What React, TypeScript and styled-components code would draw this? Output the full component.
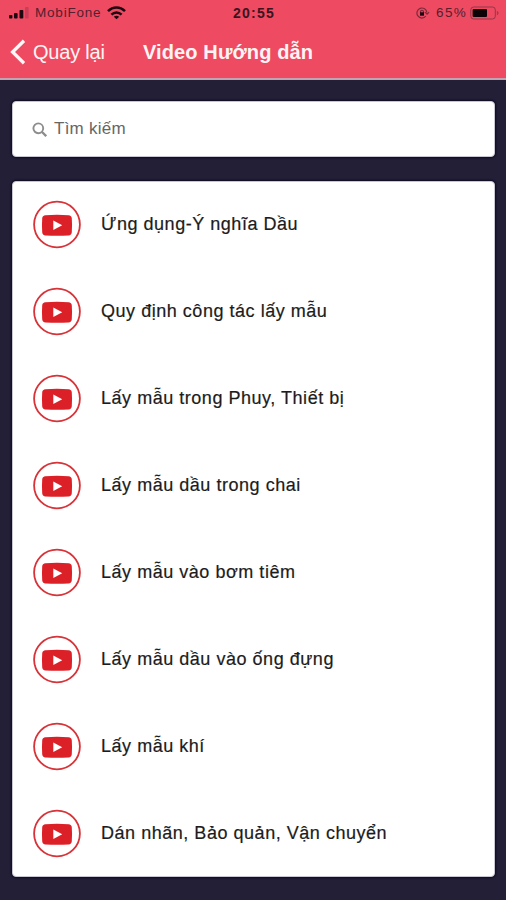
import React from "react";
import styled, { createGlobalStyle } from "styled-components";

const Global = createGlobalStyle`
  * { box-sizing: border-box; }
  body { margin: 0; background: #231f37; font-family: "Liberation Sans", Arial, sans-serif; }
`;

const Screen = styled.div`
  height: 900px;
  overflow: hidden;
  background: #231f37;
`;

const Header = styled.header`
  height: 80px;
  background: #ee4b62;
  border-bottom: 2px solid #c3a3b0;
`;

const StatusBar = styled.div`
  display: grid;
  grid-template-columns: 1fr auto 1fr;
  align-items: center;
  height: 26px;
  padding: 0 7px 0 9px;
  font-size: 13.5px;
  line-height: 26px;
  color: #54202d;
`;

const StatusGroup = styled.div<{ $end?: boolean }>`
  display: flex;
  align-items: center;
  justify-content: ${(p) => (p.$end ? "flex-end" : "flex-start")};
  gap: 6px;
`;

const Carrier = styled.span`
  letter-spacing: 0.8px;
`;

const Clock = styled.span`
  color: #3b1420;
  font-size: 14px;
  font-weight: 700;
  letter-spacing: 1.2px;
`;

const Percent = styled.span`
  letter-spacing: 1.3px;
  margin-right: -3px;
`;

const NavBar = styled.nav`
  display: flex;
  align-items: center;
  height: 52px;
  padding-left: 10px;
  color: #fff4f4;
  font-size: 20px;
`;

const BackButton = styled.button`
  display: flex;
  align-items: center;
  gap: 7px;
  width: 133px;
  padding: 0;
  border: 0;
  background: none;
  color: inherit;
  font: inherit;
  letter-spacing: -0.2px;
  white-space: nowrap;
`;

const Title = styled.h1`
  margin: 0;
  font-size: 20px;
  font-weight: 700;
  letter-spacing: 0.12px;
  white-space: nowrap;
`;

const Content = styled.main`
  display: flex;
  flex-direction: column;
  gap: 24px;
  padding: 21px 11px 0 12px;
`;

const Card = styled.section`
  background: #fff;
  border: 1px solid #c9c7d2;
  border-radius: 4px;
  box-shadow: 0 0 2px 1px #0e0a23;
`;

const SearchCard = styled(Card)`
  display: flex;
  align-items: center;
  gap: 7px;
  height: 56px;
  padding: 0 19px;
`;

const SearchInput = styled.input`
  flex: 1;
  padding: 0;
  border: 0;
  outline: 0;
  background: none;
  color: #666;
  font: 17px "Liberation Sans", Arial, sans-serif;
  letter-spacing: 0.25px;
  &::placeholder { color: #666; opacity: 1; }
`;

const VideoList = styled(Card)`
  height: 696px;
`;

const VideoRow = styled.div`
  display: flex;
  align-items: center;
  gap: 20px;
  height: 86.95px;
  padding-left: 20px;
  font-size: 18px;
  letter-spacing: 0.53px;
  color: #1c1c1c;
  -webkit-text-stroke: 0.2px #1c1c1c;
  white-space: nowrap;
`;

const Label = styled.span`
  margin-top: -2px;
`;

const videos = [
  "Ứng dụng-Ý nghĩa Dầu",
  "Quy định công tác lấy mẫu",
  "Lấy mẫu trong Phuy, Thiết bị",
  "Lấy mẫu dầu trong chai",
  "Lấy mẫu vào bơm tiêm",
  "Lấy mẫu dầu vào ống đựng",
  "Lấy mẫu khí",
  "Dán nhãn, Bảo quản, Vận chuyển",
];

const SignalIcon = () => (
  <svg width="20" height="12" viewBox="0 0 20 12" fill="#1d0710">
    <rect x="0" y="8" width="3.4" height="3.5" rx=".8" />
    <rect x="5" y="6" width="3.6" height="5.5" rx=".8" />
    <rect x="10.5" y="3" width="3.8" height="8.5" rx=".8" />
    <rect x="16" y="0" width="3.6" height="11.5" rx=".8" fill="#c83f57" />
  </svg>
);

const WifiIcon = () => (
  <svg width="19" height="14" viewBox="0 0 19 14" fill="none" stroke="#1d0710" strokeWidth="2.5">
    <path d="M1 5.2C5.9.2 13.1.2 18 5.2" />
    <path d="M4.4 8.7C7.4 5.6 11.6 5.6 14.6 8.7" />
    <path d="M9.5 13.2 6.8 10.7C8.4 9.4 10.6 9.4 12.2 10.7Z" fill="#1d0710" stroke="none" />
  </svg>
);

const RotationLockIcon = () => (
  <svg width="14" height="12" viewBox="0 0 14 12" fill="none" stroke="#7b2b3b" strokeWidth="1.2">
    <path d="M9.8 9.2A5 5 0 1 1 10.9 5.5M8.9 5.1l2.2 2 2-2" />
    <path d="M4.5 6V4.8a1.5 1.5 0 0 1 3 0V6" />
    <rect x="4" y="5.3" width="4" height="3.4" fill="#1d0710" stroke="none" />
  </svg>
);

const BatteryIcon = () => (
  <svg width="29" height="14" viewBox="0 0 29 14">
    <rect x=".8" y="1" width="24.5" height="12" rx="2.8" fill="none" stroke="#923648" />
    <rect x="2.6" y="3" width="14.4" height="8" rx="1" fill="#0d0206" />
    <path d="M26.8 4.7C29.2 5.6 29.2 8.4 26.8 9.3Z" fill="#a33c4f" />
  </svg>
);

const BackIcon = () => (
  <svg width="16" height="26" viewBox="0 0 16 26" fill="none" stroke="#fff7f7" strokeWidth="3.3">
    <path d="M14 1.8 2.6 13 14 24.2" />
  </svg>
);

const SearchIcon = () => (
  <svg width="15" height="15" viewBox="0 0 15 15" fill="none" stroke="#8d8d8d" strokeWidth="1.9">
    <circle cx="6.3" cy="6.3" r="4.9" />
    <path d="m9.8 9.8 4.4 4.4" strokeWidth="2.3" />
  </svg>
);

const VideoIcon = () => (
  <svg width="48" height="50" viewBox="0 0 48 50">
    <circle cx="24" cy="24.5" r="22.9" fill="none" stroke="#d73338" strokeWidth="1.8" />
    <path d="M12.5 15.2Q24 14.4 35.5 15.2Q38.6 15.4 38.8 18.4Q39.3 25.3 38.8 32.2Q38.6 35.1 35.5 35.4Q24 36.2 12.5 35.4Q9.4 35.1 9.2 32.2Q8.7 25.3 9.2 18.4Q9.4 15.4 12.5 15.2Z" fill="#dc2027" />
    <path d="M20.3 20.6 29.2 25.3 20.3 30Z" fill="#fff" />
  </svg>
);

export default function App() {
  return (
    <Screen>
      <Global />
      <Header>
        <StatusBar>
          <StatusGroup><SignalIcon /><Carrier>MobiFone</Carrier><WifiIcon /></StatusGroup>
          <Clock>20:55</Clock>
          <StatusGroup $end><RotationLockIcon /><Percent>65%</Percent><BatteryIcon /></StatusGroup>
        </StatusBar>
        <NavBar>
          <BackButton><BackIcon />Quay lại</BackButton>
          <Title>Video Hướng dẫn</Title>
        </NavBar>
      </Header>
      <Content>
        <SearchCard as="label"><SearchIcon /><SearchInput placeholder="Tìm kiếm" /></SearchCard>
        <VideoList>
          {videos.map((name) => (
            <VideoRow key={name}><VideoIcon /><Label>{name}</Label></VideoRow>
          ))}
        </VideoList>
      </Content>
    </Screen>
  );
}
